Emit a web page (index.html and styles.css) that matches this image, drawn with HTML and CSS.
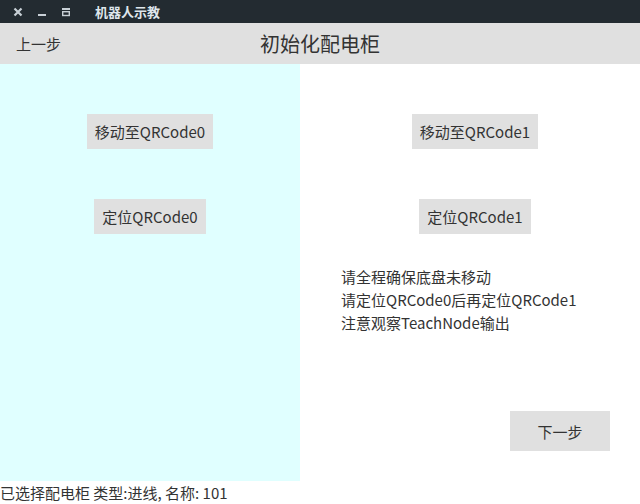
FILE: index.html
```html
<!DOCTYPE html>
<html lang="zh">
<head>
<meta charset="utf-8">
<link rel="stylesheet" href="styles.css">
</head>
<body>
<div class="window">
  <div class="titlebar">
    <div class="wm-buttons">
      <svg class="wm-icon" width="10" height="10" viewBox="0 0 10 10"><path d="M1.5 1.5 L8.5 8.5 M8.5 1.5 L1.5 8.5" stroke="#c8d0d6" stroke-width="2.2"/></svg>
      <svg class="wm-icon" width="10" height="10" viewBox="0 0 10 10"><rect x="1" y="7" width="8" height="2" fill="#c8d0d6"/></svg>
      <svg class="wm-icon" width="10" height="10" viewBox="0 0 10 10"><rect x="1" y="1" width="8" height="2" fill="#c8d0d6"/><rect x="1.7" y="4.7" width="6.6" height="3.8" fill="none" stroke="#c8d0d6" stroke-width="1.4"/></svg>
    </div>
    <span class="wm-title">机器人示教</span>
  </div>
  <div class="header">
    <span class="back">上一步</span>
    <span class="page-title">初始化配电柜</span>
    <span></span>
  </div>
  <div class="main">
    <div class="panel left">
      <div class="btn">移动至QRCode0</div>
      <div class="btn">定位QRCode0</div>
    </div>
    <div class="panel right">
      <div class="right-buttons">
        <div class="btn">移动至QRCode1</div>
        <div class="btn">定位QRCode1</div>
      </div>
      <div class="notes">
        <div>请全程确保底盘未移动</div>
        <div>请定位QRCode0后再定位QRCode1</div>
        <div>注意观察TeachNode输出</div>
      </div>
      <div class="next-row">
        <div class="btn next">下一步</div>
      </div>
    </div>
  </div>
  <div class="status">已选择配电柜 类型:进线, 名称: 101</div>
</div>
</body>
</html>
```
FILE: styles.css
```css
html, body {
  margin: 0;
  padding: 0;
  background: #ffffff;
}
body {
  font-family: "Noto Sans CJK SC", "Noto Sans", sans-serif;
  font-size: 15px;
  color: #333333;
}
.window {
  width: 640px;
  height: 504px;
  display: flex;
  flex-direction: column;
}
.titlebar {
  height: 23px;
  background: #232b31;
  display: flex;
  align-items: center;
}
.wm-buttons {
  display: flex;
  gap: 14px;
  padding-left: 13px;
  align-items: center;
}
.wm-icon {
  display: block;
}
.wm-title {
  margin-left: 24px;
  color: #dfe6ec;
  font-weight: bold;
  font-size: 13px;
}
.header {
  height: 41px;
  background: #e0e0e0;
  display: grid;
  grid-template-columns: 1fr auto 1fr;
  align-items: center;
}
.back {
  padding-left: 16px;
  font-size: 15px;
}
.page-title {
  font-size: 20px;
}
.main {
  height: 417px;
  display: flex;
}
.panel {
  display: flex;
  flex-direction: column;
  align-items: center;
}
.left {
  width: 300px;
  background: #e0ffff;
  padding-top: 50px;
  gap: 50px;
  box-sizing: border-box;
}
.right {
  flex: 1;
  padding-left: 10px;
  padding-top: 50px;
  align-items: stretch;
}
.right-buttons {
  display: flex;
  flex-direction: column;
  align-items: center;
  gap: 50px;
}
.btn {
  height: 35px;
  padding: 0 8px;
  background: #e0e0e0;
  display: flex;
  align-items: center;
  justify-content: center;
  white-space: nowrap;
  font-size: 15px;
}
.notes {
  margin-top: 31px;
  padding-left: 31px;
  line-height: 23px;
}
.next-row {
  margin-top: auto;
  margin-bottom: 30px;
  display: flex;
  justify-content: flex-end;
  padding-right: 30px;
}
.next {
  width: 100px;
  height: 40px;
  padding: 0;
  font-size: 15px;
}
.status {
  height: 23px;
  line-height: 23px;
}
```
